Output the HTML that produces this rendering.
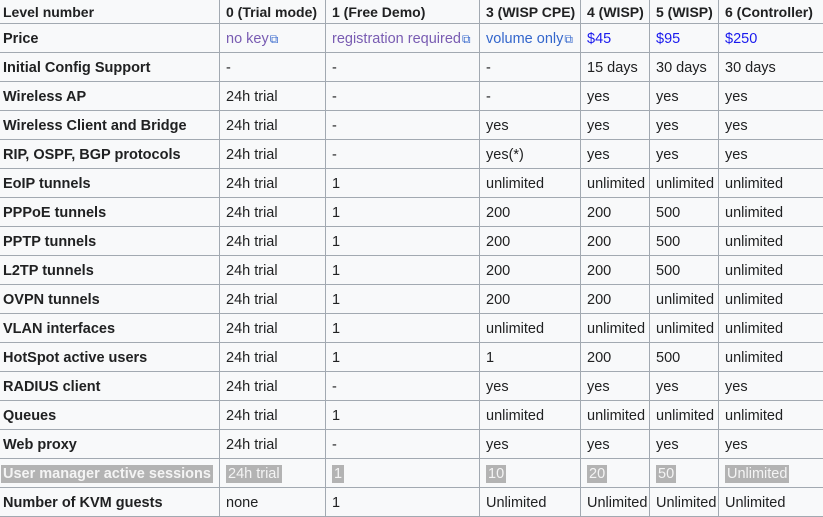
<!DOCTYPE html>
<html><head><meta charset="utf-8"><style>
html,body{margin:0;padding:0;background:#fff;width:823px;height:516px;overflow:hidden}
table{position:absolute;left:-1px;top:-6px;border-collapse:collapse;table-layout:fixed;width:826px;font-family:"Liberation Sans",Arial,sans-serif;font-size:14.5px;color:#202122;background:#f8f9fa}
td{border:1px solid #a2a9b1;height:26px;padding:2px 2px 0 6px;white-space:nowrap;overflow:hidden;vertical-align:middle;line-height:16px}
td:first-child{font-weight:bold;padding-left:3px}
tr:first-child td{font-weight:bold;font-size:14px;padding-top:6px;height:22px}
.v{color:#795cb2}.b{color:#3366cc}.n{color:#1a1aee}
.h span{background:#b3b3b3;color:#f4f4f4;padding:1px 2px}
.ext{font-size:12px;color:#3366cc;margin-left:1px}
</style></head><body>
<table>
<colgroup><col style="width:220px"><col style="width:106px"><col style="width:154px"><col style="width:101px"><col style="width:69px"><col style="width:69px"><col style="width:107px"></colgroup>
<tr><td>Level number</td><td>0 (Trial mode)</td><td>1 (Free Demo)</td><td>3 (WISP CPE)</td><td>4 (WISP)</td><td>5 (WISP)</td><td>6 (Controller)</td></tr>
<tr><td>Price</td><td class="v">no key<span class="ext">⧉</span></td><td class="v">registration required<span class="ext">⧉</span></td><td class="b">volume only<span class="ext">⧉</span></td><td class="n">$45</td><td class="n">$95</td><td class="n">$250</td></tr>
<tr><td>Initial Config Support</td><td>-</td><td>-</td><td>-</td><td>15 days</td><td>30 days</td><td>30 days</td></tr>
<tr><td>Wireless AP</td><td>24h trial</td><td>-</td><td>-</td><td>yes</td><td>yes</td><td>yes</td></tr>
<tr><td>Wireless Client and Bridge</td><td>24h trial</td><td>-</td><td>yes</td><td>yes</td><td>yes</td><td>yes</td></tr>
<tr><td>RIP, OSPF, BGP protocols</td><td>24h trial</td><td>-</td><td>yes(*)</td><td>yes</td><td>yes</td><td>yes</td></tr>
<tr><td>EoIP tunnels</td><td>24h trial</td><td>1</td><td>unlimited</td><td>unlimited</td><td>unlimited</td><td>unlimited</td></tr>
<tr><td>PPPoE tunnels</td><td>24h trial</td><td>1</td><td>200</td><td>200</td><td>500</td><td>unlimited</td></tr>
<tr><td>PPTP tunnels</td><td>24h trial</td><td>1</td><td>200</td><td>200</td><td>500</td><td>unlimited</td></tr>
<tr><td>L2TP tunnels</td><td>24h trial</td><td>1</td><td>200</td><td>200</td><td>500</td><td>unlimited</td></tr>
<tr><td>OVPN tunnels</td><td>24h trial</td><td>1</td><td>200</td><td>200</td><td>unlimited</td><td>unlimited</td></tr>
<tr><td>VLAN interfaces</td><td>24h trial</td><td>1</td><td>unlimited</td><td>unlimited</td><td>unlimited</td><td>unlimited</td></tr>
<tr><td>HotSpot active users</td><td>24h trial</td><td>1</td><td>1</td><td>200</td><td>500</td><td>unlimited</td></tr>
<tr><td>RADIUS client</td><td>24h trial</td><td>-</td><td>yes</td><td>yes</td><td>yes</td><td>yes</td></tr>
<tr><td>Queues</td><td>24h trial</td><td>1</td><td>unlimited</td><td>unlimited</td><td>unlimited</td><td>unlimited</td></tr>
<tr><td>Web proxy</td><td>24h trial</td><td>-</td><td>yes</td><td>yes</td><td>yes</td><td>yes</td></tr>
<tr class="h"><td style="padding-left:1px"><span>User manager active sessions</span></td><td><span>24h trial</span></td><td><span>1</span></td><td><span>10</span></td><td><span>20</span></td><td><span>50</span></td><td><span>Unlimited</span></td></tr>
<tr><td>Number of KVM guests</td><td>none</td><td>1</td><td>Unlimited</td><td>Unlimited</td><td>Unlimited</td><td>Unlimited</td></tr>
</table>
</body></html>
